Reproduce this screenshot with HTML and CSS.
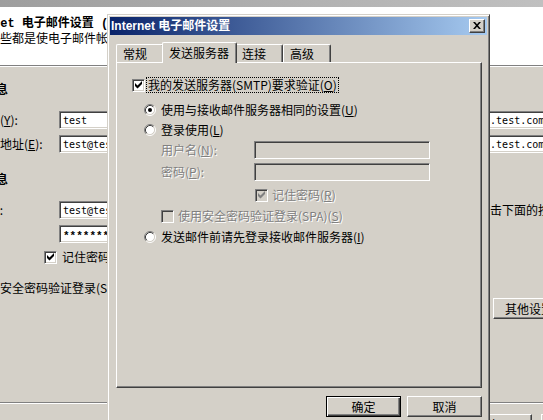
FILE: index.html
```html
<!DOCTYPE html>
<html lang="zh-CN">
<head>
  <meta charset="UTF-8">
  <meta name="viewport" content="width=device-width, initial-scale=1">
  <title>Internet 电子邮件设置</title>
  <link rel="stylesheet" href="styles.css">
</head>
<body>
  <!-- shared glyphs -->
  <svg class="defs" width="0" height="0" aria-hidden="true">
    <symbol id="radio" viewBox="0 0 12 12">
      <circle cx="6" cy="6" r="4.5" fill="#fff"/>
      <path d="M2.11 9.89 A5.5 5.5 0 0 1 9.89 2.11" fill="none" stroke="#808080"/>
      <path d="M9.89 2.11 A5.5 5.5 0 0 1 2.11 9.89" fill="none" stroke="#fff"/>
      <path d="M2.82 9.18 A4.5 4.5 0 0 1 9.18 2.82" fill="none" stroke="#404040"/>
      <path d="M9.18 2.82 A4.5 4.5 0 0 1 2.82 9.18" fill="none" stroke="#d4d0c8"/>
    </symbol>
    <symbol id="tick" viewBox="0 0 7 8">
      <path d="M0 2 L2.5 4.5 L7 0 V3 L2.5 7.5 L0 5 Z"/>
    </symbol>
  </svg>

  <!-- account wizard underneath -->
  <div class="wizard">
    <div class="wizard-title"></div>
    <div class="wizard-header">
      <div class="header-title">Internet 电子邮件设置 (POP3)</div>
      <div class="header-sub">这些都是使电子邮件帐户正确运行的必需设置。</div>
    </div>
    <div class="wizard-body">
      <div class="wizard-col">
        <div class="group-title">用户信息</div>
        <div class="field first">
          <span class="field-label">您的姓名(<u>Y</u>):</span>
          <span class="textbox">test</span>
        </div>
        <div class="field">
          <span class="field-label">电子邮件地址(<u>E</u>):</span>
          <span class="textbox">test@test.com</span>
        </div>
        <div class="group-title second">登录信息</div>
        <div class="field first">
          <span class="field-label">用户名(<u>I</u>):</span>
          <span class="textbox">test@test.com</span>
        </div>
        <div class="field">
          <span class="field-label">密码(<u>P</u>):</span>
          <span class="textbox secret">*******</span>
        </div>
        <div class="check-row remember-me">
          <span class="check"><svg class="tick" width="7" height="8"><use href="#tick"/></svg></span>
          <span>记住密码(<u>R</u>)</span>
        </div>
        <div class="check-row spa">
          <span class="check"></span>
          <span>使用安全密码验证登录(SPA)(<u>L</u>)</span>
        </div>
      </div>
      <div class="wizard-col server">
        <div class="field server-first">
          <span class="field-label">接收邮件服务器(<u>I</u>):</span>
          <span class="textbox">mail.test.com</span>
        </div>
        <div class="field">
          <span class="field-label">发送邮件服务器(<u>O</u>):</span>
          <span class="textbox">smtp.test.com</span>
        </div>
        <div class="hint">单击下面的按钮(<u>T</u>)。</div>
        <button class="btn more">其他设置(<u>M</u>)...</button>
      </div>
    </div>
    <div class="wizard-footer">
      <button class="btn">&lt; 上一步(<u>B</u>)</button>
      <button class="btn">下一步(<u>N</u>) &gt;</button>
      <button class="btn cancel">取消</button>
    </div>
  </div>

  <!-- Internet e-mail settings dialog -->
  <div class="dialog">
    <div class="titlebar">
      <span class="title">Internet 电子邮件设置</span>
      <span class="close">
        <svg width="8" height="7" viewBox="0 0 8 7"><path d="M0 0 H2 L4 2.3 L6 0 H8 L5 3.5 L8 7 H6 L4 4.7 L2 7 H0 L3 3.5 Z"/></svg>
      </span>
    </div>
    <div class="dialog-body">
      <div class="tabs">
        <span class="tab">常规</span>
        <span class="tab active">发送服务器</span>
        <span class="tab">连接</span>
        <span class="tab">高级</span>
      </div>
      <div class="panel">
        <div class="row opt-auth">
          <span class="check"><svg class="tick" width="7" height="8"><use href="#tick"/></svg></span>
          <span class="focus">我的发送服务器(SMTP)要求验证(<u>O</u>)</span>
        </div>
        <div class="row radio-row opt-same">
          <svg class="radio" width="12" height="12" viewBox="0 0 12 12"><use href="#radio"/><circle cx="6" cy="6" r="2"/></svg>
          <span>使用与接收邮件服务器相同的设置(<u>U</u>)</span>
        </div>
        <div class="row radio-row opt-login">
          <svg class="radio" width="12" height="12" viewBox="0 0 12 12"><use href="#radio"/></svg>
          <span>登录使用(<u>L</u>)</span>
        </div>
        <div class="sub-field opt-user">
          <span class="sub-label disabled">用户名(<u>N</u>):</span>
          <span class="input"></span>
        </div>
        <div class="sub-field opt-pass">
          <span class="sub-label disabled">密码(<u>P</u>):</span>
          <span class="input"></span>
        </div>
        <div class="row opt-remember">
          <span class="check off"><svg class="tick" width="7" height="8"><use href="#tick"/></svg></span>
          <span class="disabled">记住密码(<u>R</u>)</span>
        </div>
        <div class="row opt-spa">
          <span class="check off"></span>
          <span class="disabled">使用安全密码验证登录(SPA)(<u>S</u>)</span>
        </div>
        <div class="row radio-row opt-before">
          <svg class="radio" width="12" height="12" viewBox="0 0 12 12"><use href="#radio"/></svg>
          <span>发送邮件前请先登录接收邮件服务器(<u>I</u>)</span>
        </div>
      </div>
      <div class="dialog-buttons">
        <button class="btn default">确定</button>
        <button class="btn">取消</button>
      </div>
    </div>
  </div>
</body>
</html>
```

FILE: styles.css
```css
* {
  box-sizing: border-box;
}
body {
  margin: 0;
  width: 543px;
  height: 420px;
  overflow: hidden;
  position: relative;
  background: #d4d0c8;
  font: 12px/14px "Noto Sans CJK SC", sans-serif;
  color: #000;
}
.defs {
  position: absolute;
}
u {
  text-underline-offset: 1px;
}

/* shared classic widgets */
.btn {
  display: flex;
  align-items: center;
  justify-content: center;
  width: 75px;
  height: 21px;
  padding: 0;
  font: inherit;
  color: #000;
  background: #d4d0c8;
  border: 1px solid;
  border-color: #fff #404040 #404040 #fff;
  box-shadow: inset -1px -1px #808080;
}
.btn.default {
  border-color: #000;
  box-shadow: inset 1px 1px #fff, inset -1px -1px #404040, inset -2px -2px #808080;
}
.check {
  display: flex;
  align-items: center;
  justify-content: center;
  flex-shrink: 0;
  width: 13px;
  height: 13px;
  background: #fff;
  border: 1px solid;
  border-color: #808080 #fff #fff #808080;
  box-shadow: inset 1px 1px #404040, inset -1px -1px #d4d0c8;
}
.check .tick {
  fill: #000;
}
.check.off {
  background: #d4d0c8;
}
.check.off .tick {
  fill: #808080;
}
.disabled {
  color: #808080;
  text-shadow: 1px 1px 0 #fff;
}

/* wizard */
.wizard {
  position: absolute;
  left: -62px;
  top: -11px;
  width: 700px;
  height: 450px;
  background: #d4d0c8;
}
.wizard-title {
  height: 18px;
  background: linear-gradient(to right, #9a9a9a, #c6c6c6);
}
.wizard-header {
  height: 59px;
  padding: 10px 0 0 19px;
  background: #fff;
  border-bottom: 1px solid #808080;
  box-shadow: 0 1px 0 #fff;
}
.header-title {
  font-family: "Liberation Mono", "Noto Sans CJK SC", monospace;
  font-weight: bold;
}
.header-sub {
  padding-left: 31px;
}
.wizard-body {
  display: flex;
  height: 336px;
}
.wizard-col {
  width: 330px;
  padding-left: 14px;
}
.wizard-col.server {
  width: 370px;
  padding-left: 0;
}
.group-title {
  margin: 16px 0 0 8px;
  font-weight: bold;
}
.group-title.second {
  margin-top: 19px;
}
.field {
  display: flex;
  align-items: center;
  height: 18px;
  margin-top: 6px;
  white-space: nowrap;
}
.field.first {
  margin-top: 15px;
}
.field.server-first {
  margin-top: 45px;
}
.field-label {
  flex-shrink: 0;
  width: 107px;
}
.server .field-label {
  width: 194px;
}
.textbox {
  display: flex;
  align-items: center;
  width: 150px;
  height: 18px;
  padding-left: 3px;
  background: #fff;
  border: 1px solid;
  border-color: #808080 #fff #fff #808080;
  box-shadow: inset 1px 1px #404040, inset -1px -1px #d4d0c8;
  font: 10px "DejaVu Sans Mono", monospace;
}
.textbox.secret {
  padding-top: 3px;
  font: bold 11px "Liberation Mono", monospace;
}
.check-row {
  display: flex;
  align-items: center;
  gap: 5px;
  height: 14px;
  white-space: nowrap;
}
.remember-me {
  margin: 7px 0 0 92px;
}
.spa {
  margin: 17px 0 0 6px;
}
.hint {
  margin-top: 50px;
  padding-left: 210px;
  white-space: nowrap;
}
.btn.more {
  width: 100px;
  margin: 81px 0 0 225px;
}
.wizard-footer {
  display: flex;
  justify-content: flex-end;
  padding: 11px 22px 0 0;
  border-top: 1px solid #808080;
  box-shadow: inset 0 1px #fff;
}
.wizard-footer .cancel {
  margin-left: 9px;
}

/* dialog */
.dialog {
  position: absolute;
  left: 107px;
  top: 14px;
  width: 383px;
  height: 416px;
  padding: 2px;
  background: #d4d0c8;
  border: 1px solid;
  border-color: #d4d0c8 #404040 #404040 #d4d0c8;
  box-shadow: inset 1px 1px #fff, inset -1px -1px #808080;
}
.titlebar {
  display: flex;
  align-items: center;
  height: 18px;
  padding: 0 2px 0 1px;
  background: linear-gradient(to right, #0a246a, #a6caf0);
  color: #fff;
  font-family: "Liberation Sans", "Noto Sans CJK SC", sans-serif;
  font-weight: bold;
}
.title {
  flex: 1;
}
.close {
  display: flex;
  align-items: center;
  justify-content: center;
  width: 16px;
  height: 14px;
  padding: 0 1px 1px 0;
  background: #d4d0c8;
  border: 1px solid;
  border-color: #fff #404040 #404040 #fff;
  box-shadow: inset -1px -1px #808080;
}
.dialog-body {
  padding: 7px 5px 0 6px;
}
.tabs {
  display: flex;
  align-items: flex-end;
  height: 20px;
}
.tab {
  min-width: 48px;
  height: 18px;
  padding: 0 4px 0 6px;
  line-height: 17px;
  white-space: nowrap;
  border: 1px solid;
  border-bottom: 0;
  border-color: #fff #404040 #404040 #fff;
  border-radius: 2px 2px 0 0;
  box-shadow: inset -1px 0 #808080;
}
.tab.active {
  position: relative;
  z-index: 1;
  height: 21px;
  margin: 0 -2px -1px;
  padding-right: 7px;
  line-height: 19px;
  background: #d4d0c8;
}
.panel {
  height: 326px;
  padding-left: 15px;
  border: 1px solid;
  border-color: #fff #404040 #404040 #fff;
  box-shadow: inset -1px -1px #808080;
}
.row {
  display: flex;
  align-items: center;
  gap: 4px;
  height: 16px;
  white-space: nowrap;
}
.radio-row {
  gap: 5px;
  padding-left: 12px;
}
.radio {
  flex-shrink: 0;
}
.focus {
  margin-left: -2px;
  padding: 0 1px;
  outline: 1px dotted #000;
}
.opt-auth {
  margin-top: 14px;
}
.opt-same {
  margin-top: 9px;
}
.opt-login {
  margin-top: 4px;
}
.sub-field {
  display: flex;
  align-items: center;
  height: 18px;
  padding-left: 29px;
  white-space: nowrap;
}
.sub-label {
  width: 93px;
}
.input {
  width: 176px;
  height: 18px;
  background: #d4d0c8;
  border: 1px solid;
  border-color: #808080 #fff #fff #808080;
  box-shadow: inset 1px 1px #404040, inset -1px -1px #d4d0c8;
}
.opt-user {
  margin-top: 3px;
}
.opt-pass {
  margin-top: 4px;
}
.opt-remember {
  margin-top: 6px;
  padding-left: 123px;
}
.opt-spa {
  margin-top: 5px;
  padding-left: 29px;
}
.opt-before {
  margin-top: 5px;
}
.dialog-buttons {
  display: flex;
  justify-content: flex-end;
  gap: 6px;
  margin-top: 8px;
}
```
